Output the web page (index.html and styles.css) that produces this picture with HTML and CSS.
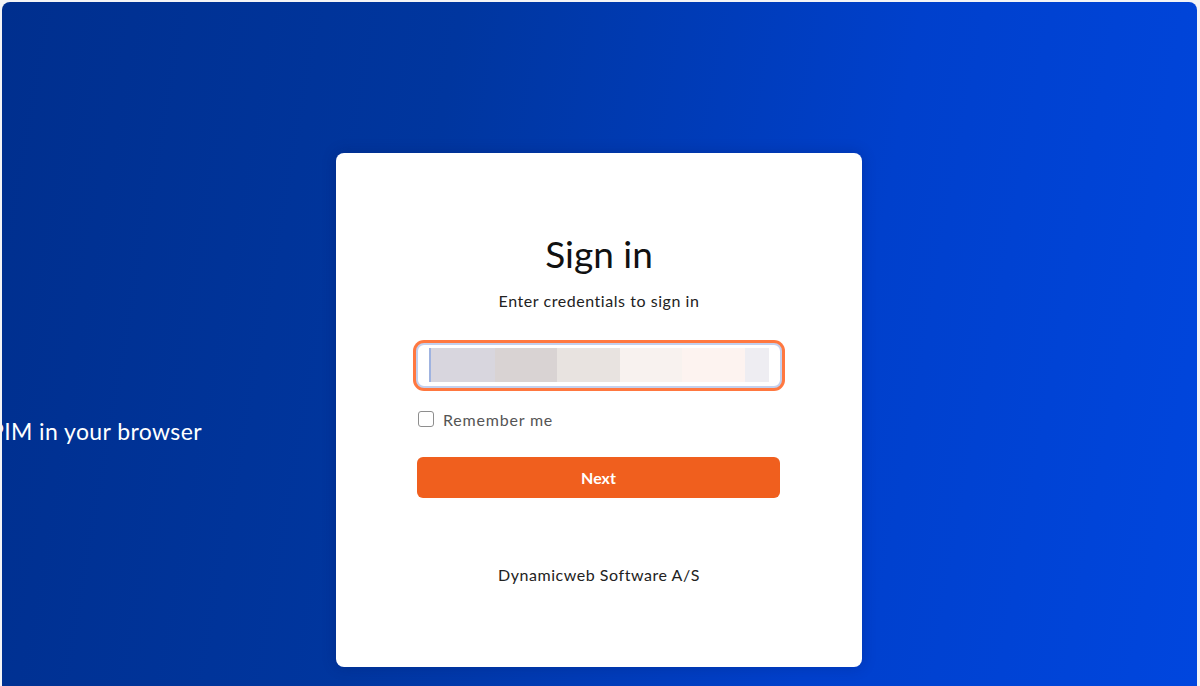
FILE: index.html
```html
<!DOCTYPE html>
<html lang="en">
<head>
    <meta charset="UTF-8">
    <title>Sign in</title>
    <link rel="stylesheet" href="styles.css">
</head>
<body>
    <div class="frame">
        <div class="tagline">PIM in your browser</div>
        <div class="card">
            <h1 class="title">Sign in</h1>
            <p class="subtitle">Enter credentials to sign in</p>
            <form class="form">
                <div class="field">
                    <span class="caret"></span>
                    <span class="blur" style="background:#d8d6de;width:64px"></span>
                    <span class="blur" style="background:#d9d3d3;width:62px"></span>
                    <span class="blur" style="background:#e8e3e0;width:63px"></span>
                    <span class="blur" style="background:#f8f2ef;width:62px"></span>
                    <span class="blur" style="background:#fdf3f0;width:63px"></span>
                    <span class="blur" style="background:#eeedf2;width:24px"></span>
                </div>
                <label class="remember">
                    <span class="check"></span>
                    Remember me
                </label>
                <button type="button" class="btn">Next</button>
            </form>
            <div class="footer">Dynamicweb Software A/S</div>
        </div>
    </div>
</body>
</html>
```

FILE: styles.css
```css
* {
    padding: 0px;
    margin: 0px;
    box-sizing: border-box;
}
body {
    background: #f4f4f6;
    font-family: Lato, "Liberation Sans", sans-serif;
    overflow: hidden;
}
.frame {
    display: flex;
    align-items: flex-start;
    margin: 2px 3px 0 2px;
    height: 684px;
    border-radius: 8px 8px 0 0;
    overflow: hidden;
    background: linear-gradient(100deg, #002f8e 0%, #00369f 35%, #0040cc 70%, #0046de 100%);
}
.tagline {
    flex: none;
    width: 346px;
    margin-left: -12px;
    margin-top: 413px;
    font-size: 23px;
    line-height: 32px;
    letter-spacing: 0.4px;
    color: #fff;
    white-space: nowrap;
}
.card {
    flex: none;
    display: flex;
    flex-direction: column;
    align-items: center;
    width: 526px;
    height: 514px;
    margin-top: 151px;
    padding-top: 81px;
    background: #fff;
    border-radius: 8px;
    box-shadow: 0 0 14px rgba(0, 20, 80, 0.25);
}
.title {
    font-size: 37px;
    line-height: 40px;
    font-weight: 400;
    color: #111;
}
.subtitle {
    margin-top: 17px;
    font-size: 16px;
    line-height: 20px;
    letter-spacing: 0.55px;
    color: #222;
}
.form {
    display: flex;
    flex-direction: column;
    width: 366px;
    margin-top: 32px;
}
.field {
    display: flex;
    align-items: stretch;
    height: 45px;
    padding: 3px 11px 4px 11px;
    border: 2px solid #c3d0ee;
    border-radius: 8px;
    background: #fff;
    box-shadow: 0 0 0 3px #ff7840;
}
.caret {
    width: 2px;
    background: #9fb3e0;
}
.blur {
    display: block;
}
.remember {
    display: flex;
    align-items: center;
    gap: 9px;
    height: 20px;
    margin-top: 21px;
    margin-left: 2px;
    font-size: 16px;
    letter-spacing: 0.8px;
    color: #555;
}
.check {
    width: 16px;
    height: 16px;
    border: 1px solid #8e8e8e;
    border-radius: 3px;
    background: #fff;
}
.btn {
    height: 41px;
    margin-top: 28px;
    margin-left: 1px;
    width: 363px;
    border: none;
    border-radius: 6px;
    background: #f05f1e;
    color: #fff;
    font-family: Lato, "Liberation Sans", sans-serif;
    font-size: 16px;
    font-weight: 700;
}
.footer {
    margin-top: 67px;
    font-size: 16px;
    line-height: 20px;
    letter-spacing: 0.55px;
    color: #222;
}
```
